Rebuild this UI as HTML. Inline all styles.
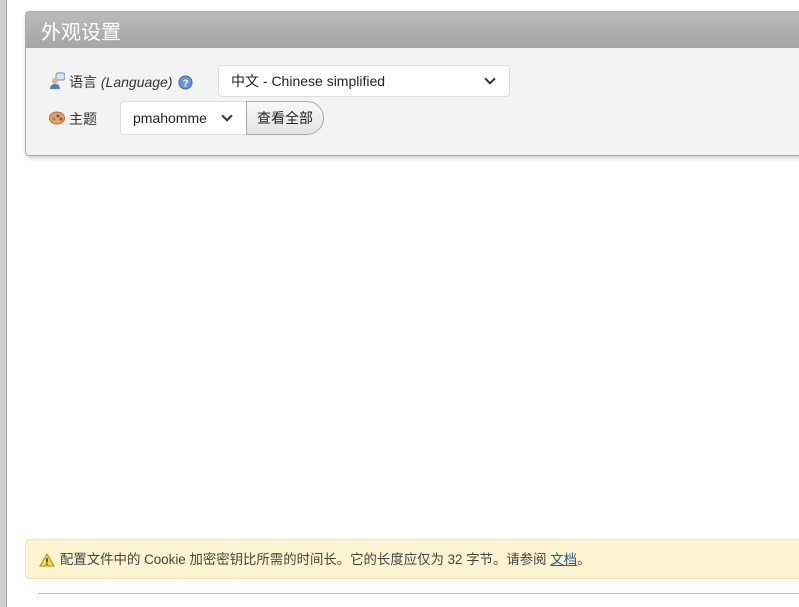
<!DOCTYPE html>
<html><head><meta charset="utf-8"><style>
body{margin:0;width:799px;height:607px;background:#fff;position:relative;overflow:hidden;font-family:"Liberation Sans","Noto Sans CJK SC",sans-serif;font-size:13px;color:#333}
.lbar{position:absolute;left:0;top:0;width:6px;height:607px;background:#d0d0d0;border-right:1px solid #aaa}
.panel{position:absolute;left:25px;top:11px;width:790px;height:143px;background:#f3f3f3;border:1px solid #aaa;border-radius:4px;box-shadow:1px 2px 4px rgba(0,0,0,.2)}
.hd{height:36px;background:linear-gradient(#bbb,#a5a5a5);border-radius:3px 3px 0 0;color:#fff;font-size:20px;line-height:38px;padding-left:15px;font-family:"Noto Sans CJK SC",sans-serif}
.sel{position:absolute;background:#fff;border:1px solid #ddd;border-radius:4px;box-sizing:border-box;font-size:14px;line-height:30px;padding-left:12px;color:#222}
.chev{position:absolute;right:15px;top:9px;width:6px;height:6px;border-right:2px solid #333;border-bottom:2px solid #333;transform:rotate(45deg)}
.lbl{position:absolute;font-size:14px;color:#333}
.btn{position:absolute;left:246px;top:101px;width:78px;height:34px;box-sizing:border-box;border:1px solid #aaa;border-radius:0 17px 17px 0;background:linear-gradient(#f8f8f8,#e4e4e4);font-size:14px;line-height:32px;text-align:center;color:#222}
.warn{position:absolute;left:25px;top:539px;width:790px;height:40px;box-sizing:border-box;background:#fcf3d0;border:1px solid #f7e3a5;border-radius:4px;font-size:13.4px;line-height:40px;padding-left:34px;color:#444}
.line{position:absolute;left:38px;top:593px;width:770px;height:1px;background:#bbb}
</style></head><body>
<div class="lbar"></div>
<div class="panel"><div class="hd">外观设置</div></div>
<svg style="position:absolute;left:49px;top:72px" width="16" height="18"><rect x="7" y="1" width="9" height="7" rx="2" fill="#cfe3f5" stroke="#6a8fb5"/><circle cx="6" cy="9" r="3" fill="#e8b083"/><path d="M1 17 Q1 12 6 12 Q11 12 11 17Z" fill="#4b7fc0"/></svg>
<div class="lbl" style="left:69px;top:72px">语言 <i style="color:#333">(Language)</i></div>
<svg style="position:absolute;left:178px;top:75px" width="15" height="15"><circle cx="7.5" cy="7.5" r="6.5" fill="#6d96d0" stroke="#3c66a8"/><text x="7.5" y="11.5" font-size="10" font-weight="bold" fill="#fff" text-anchor="middle" font-family="Liberation Sans">?</text></svg>
<div class="sel" style="left:218px;top:65px;width:292px;height:32px">中文 - Chinese simplified<div class="chev"></div></div>
<svg style="position:absolute;left:49px;top:111px" width="16" height="14"><ellipse cx="8" cy="7" rx="7.5" ry="6" fill="#e8a060" stroke="#b86a30"/><circle cx="5" cy="8" r="1.5" fill="#3a8"/><circle cx="9" cy="5" r="1.5" fill="#36c"/><circle cx="12" cy="8" r="1.5" fill="#d33"/></svg>
<div class="lbl" style="left:69px;top:109px">主题</div>
<div class="sel" style="left:120px;top:101px;width:127px;height:34px;line-height:32px;border-radius:4px 0 0 4px">pmahomme<div class="chev" style="top:10px"></div></div>
<div class="btn">查看全部</div>
<div class="warn">配置文件中的 Cookie 加密密钥比所需的时间长。它的长度应仅为 32 字节。请参阅 <u style="color:#235a81">文档</u>。</div>
<svg style="position:absolute;left:39px;top:553px" width="16" height="14"><path d="M8 1 L15 13 L1 13Z" fill="#f7d34a" stroke="#b08a10"/><rect x="7.3" y="5" width="1.4" height="4.5" fill="#333"/><rect x="7.3" y="10.5" width="1.4" height="1.4" fill="#333"/></svg>
<div class="line"></div>
</body></html>
